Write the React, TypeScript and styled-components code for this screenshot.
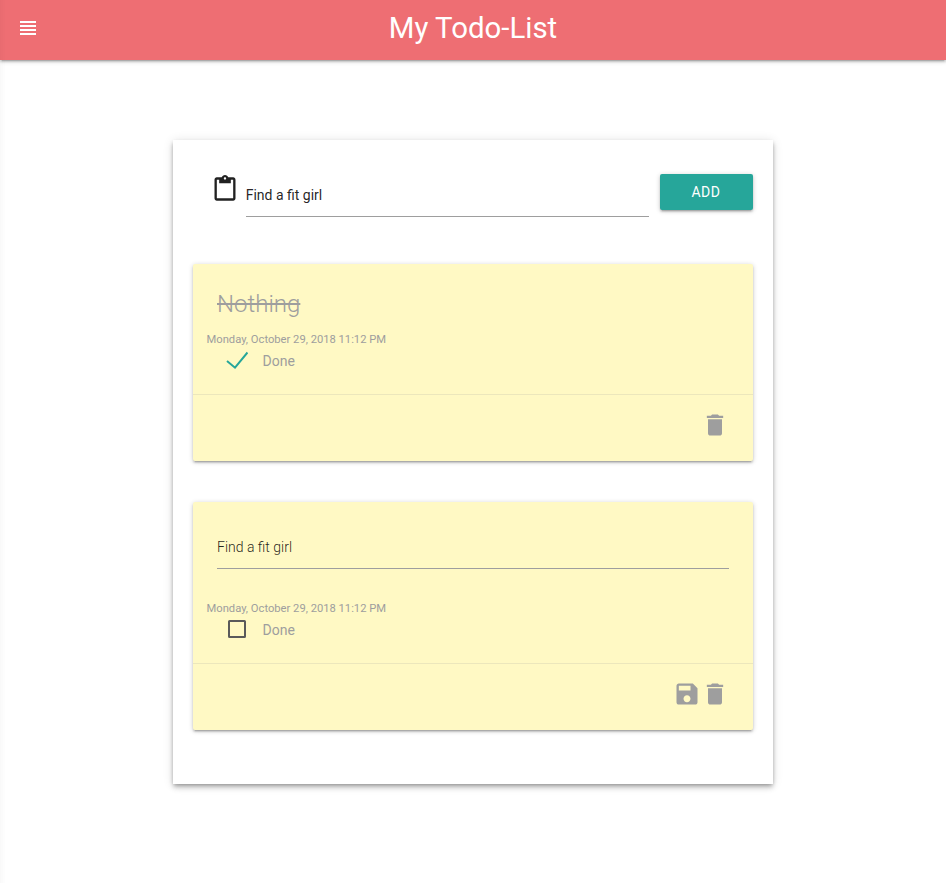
import React from 'react';
import styled, { createGlobalStyle } from 'styled-components';

const GlobalStyle = createGlobalStyle`
  *, *::before, *::after { box-sizing: border-box; }
  body {
    margin: 0;
    background: #fff;
    color: rgba(0, 0, 0, 0.87);
    font-family: Roboto, sans-serif;
    font-size: 14px;
    line-height: 1.5;
  }
`;

const raised =
  '0 2px 2px 0 rgba(0,0,0,0.14), 0 3px 1px -2px rgba(0,0,0,0.12), 0 1px 5px 0 rgba(0,0,0,0.2)';
const raisedHigh =
  '0 4px 5px 0 rgba(0,0,0,0.14), 0 1px 10px 0 rgba(0,0,0,0.12), 0 2px 4px -1px rgba(0,0,0,0.3)';

const Page = styled.div`
  min-height: 883px;
`;

/* Shadow cast by the closed side drawer. */
const DrawerEdge = styled.div`
  position: fixed;
  inset: 0 auto 0 0;
  width: 6px;
  pointer-events: none;
  background: linear-gradient(to right, rgba(0, 0, 0, 0.025), rgba(0, 0, 0, 0));
`;

const TopBar = styled.header`
  display: grid;
  grid-template-columns: 56px 1fr 56px;
  align-items: center;
  height: 60px;
  padding-bottom: 4px;
  background: #ee6e73;
  color: #fff;
  box-shadow: ${raised};
`;

const MenuButton = styled.button`
  display: flex;
  justify-content: center;
  padding: 0;
  border: 0;
  background: none;
  color: inherit;
`;

const PageTitle = styled.h1`
  margin: 0;
  text-align: center;
  font-size: 29.4px;
  font-weight: 400;
  line-height: 56px;
`;

const Panel = styled.main`
  display: flex;
  flex-direction: column;
  width: 600px;
  height: 644px;
  margin: 80px auto 0;
  padding: 34px 20px 0;
  background: #fff;
  box-shadow: ${raisedHigh};
`;

const AddRow = styled.form`
  display: flex;
  align-items: flex-start;
  height: 50px;
  margin-bottom: 40px;
  padding-left: 17.5px;
`;

const TextInput = styled.input<{ $light?: boolean }>`
  display: block;
  width: 100%;
  height: ${({ $light }) => ($light ? 43 : 44)}px;
  padding: ${({ $light }) => ($light ? 0 : 1)}px 0 0;
  border: 0;
  border-bottom: 1px solid #9e9e9e;
  border-radius: 0;
  outline: none;
  background: transparent;
  color: rgba(0, 0, 0, 0.87);
  font-family: inherit;
  font-size: 14px;
  font-weight: ${({ $light }) => ($light ? 300 : 400)};
`;

const AddIcon = styled.div`
  padding-top: 0.5px;
`;

const AddField = styled.div`
  width: 403.3px;
  margin: -1px 11px 0 7.2px;
`;

const AddButton = styled.button`
  width: 93px;
  height: 36px;
  padding: 0 1px 0 0;
  border: 0;
  border-radius: 2px;
  background: #26a69a;
  color: #fff;
  font-family: inherit;
  font-size: 14px;
  letter-spacing: 0.5px;
  line-height: 36px;
  box-shadow: ${raised};
`;

const Card = styled.article`
  margin-bottom: 41px;
  border-radius: 2px;
  background: #fff9c4;
  color: #9e9e9e;
  box-shadow: ${raised};
`;

const CardBody = styled.div<{ $editing?: boolean }>`
  display: flex;
  flex-direction: column;
  height: ${({ $editing }) => ($editing ? 161 : 130)}px;
  padding: 24px 24px 0;
`;

const CardTitle = styled.h2`
  height: 32px;
  margin: 0 0 11px;
  font-size: 24px;
  font-weight: 300;
  line-height: 32px;
  text-decoration: line-through;
`;

const EditField = styled.div`
  height: 74px;
`;

const Stamp = styled.time`
  margin-left: -10.5px;
  height: 18px;
  font-size: 11.2px;
  line-height: 18px;
`;

const Check = styled.label`
  display: flex;
  align-items: center;
  gap: 14.5px;
  height: 25px;
  padding-left: 9px;
  font-size: 14px;
`;

const CheckMark = styled.svg`
  display: block;
  width: 22px;
  height: 20px;
  margin-bottom: 3px;
`;

const CardActions = styled.footer`
  display: flex;
  justify-content: flex-end;
  height: 67px;
  padding: 15.5px 24px;
  border-top: 1px solid rgba(160, 160, 160, 0.2);
`;

const IconButton = styled.button`
  display: block;
  height: 28px;
  padding: 0;
  border: 0;
  background: none;
  color: inherit;
`;

const Glyph = styled.svg<{ $size: number }>`
  display: block;
  flex: none;
  width: ${({ $size }) => $size}px;
  height: ${({ $size }) => $size}px;
  fill: currentColor;
`;

const icons = {
  menu: 'M4 15h16v-2H4v2zm0 4h16v-2H4v2zm0-8h16V9H4v2zm0-6v2h16V5H4z',
  clipboard:
    'M19 2h-4.18C14.4.84 13.3 0 12 0c-1.3 0-2.4.84-2.82 2H5c-1.1 0-2 .9-2 2v16c0 1.1.9 2 2 2h14c1.1 0 2-.9 2-2V4c0-1.1-.9-2-2-2zm-7 0c.55 0 1 .45 1 1s-.45 1-1 1-1-.45-1-1 .45-1 1-1zm7 18H5V4h2v3h10V4h2v16z',
  trash: 'M6 19c0 1.1.9 2 2 2h8c1.1 0 2-.9 2-2V7H6v12zM19 4h-3.5l-1-1h-5l-1 1H5v2h14V4z',
  save: 'M17 3H5c-1.11 0-2 .9-2 2v14c0 1.1.89 2 2 2h14c1.1 0 2-.9 2-2V7l-4-4zm-5 16c-1.66 0-3-1.34-3-3s1.34-3 3-3 3 1.34 3 3-1.34 3-3 3zm3-10H5V5h10v4z',
};

const Icon = ({ name, size = 28 }: { name: keyof typeof icons; size?: number }) => (
  <Glyph $size={size} viewBox="0 0 24 24" aria-hidden="true">
    <path d={icons[name]} />
  </Glyph>
);

interface Todo {
  title: string;
  date: string;
  done: boolean;
}

const todos: Todo[] = [
  { title: 'Nothing', date: 'Monday, October 29, 2018 11:12 PM', done: true },
  { title: 'Find a fit girl', date: 'Monday, October 29, 2018 11:12 PM', done: false },
];

const TodoCard = ({ todo }: { todo: Todo }) => (
  <Card>
    <CardBody $editing={!todo.done}>
      {todo.done ? (
        <CardTitle>{todo.title}</CardTitle>
      ) : (
        <EditField>
          <TextInput $light defaultValue={todo.title} />
        </EditField>
      )}
      <Stamp>{todo.date}</Stamp>
      <Check>
        <CheckMark viewBox="0 0 22 20" fill="none">
          {todo.done ? (
            <path d="M1 11L9 17.7L21.5 2.5" stroke="#26a69a" strokeWidth="2" />
          ) : (
            <rect x="3" y="2" width="16" height="16" rx="0.5" stroke="#5a5a5a" strokeWidth="2" />
          )}
        </CheckMark>
        Done
      </Check>
    </CardBody>
    <CardActions>
      {!todo.done && (
        <IconButton aria-label="Save">
          <Icon name="save" />
        </IconButton>
      )}
      <IconButton aria-label="Delete">
        <Icon name="trash" />
      </IconButton>
    </CardActions>
  </Card>
);

export default function App() {
  return (
    <Page>
      <GlobalStyle />
      <TopBar>
        <MenuButton aria-label="Menu">
          <Icon name="menu" size={24} />
        </MenuButton>
        <PageTitle>My Todo-List</PageTitle>
      </TopBar>
      <Panel>
        <AddRow onSubmit={(e) => e.preventDefault()}>
          <AddIcon>
            <Icon name="clipboard" />
          </AddIcon>
          <AddField>
            <TextInput defaultValue="Find a fit girl" />
          </AddField>
          <AddButton>ADD</AddButton>
        </AddRow>
        {todos.map((todo) => (
          <TodoCard key={todo.title} todo={todo} />
        ))}
      </Panel>
      <DrawerEdge />
    </Page>
  );
}
